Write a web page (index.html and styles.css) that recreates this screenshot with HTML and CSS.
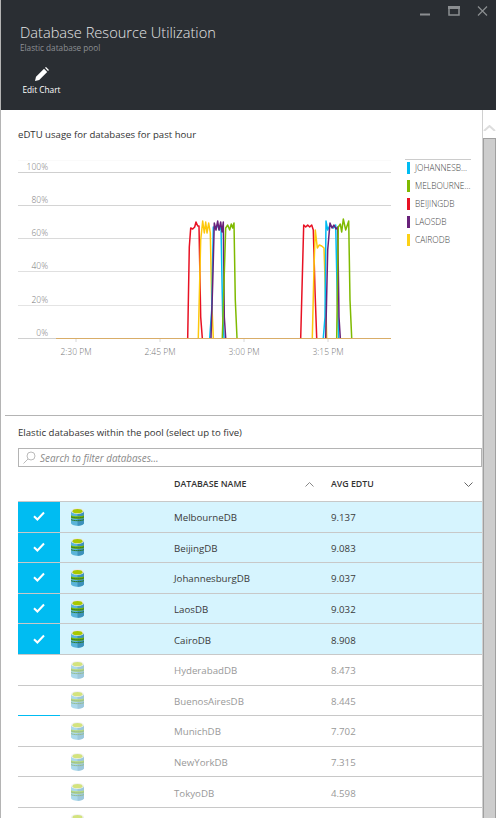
FILE: index.html
```html
<!DOCTYPE html>
<html>
	<head>
		<meta charset="utf-8">
		<title>Database Resource Utilization</title>
		<link rel="stylesheet" href="styles.css">
	</head>
	<body>
		<svg class="defs" width="0" height="0">
			<symbol id="db" viewBox="0 0 13 18">
				<path d="M0 3v12c0 1.600 3 2.800 6.500 2.800S13 16.600 13 15V3z" fill="#59b4d9"/>
				<path d="M6.500 3v14.800c3.500 0 6.500-1.200 6.500-2.800V3z" fill="#3e92bc"/>
				<path d="M0 7.200c2 1.400 11 1.400 13 0v2.600c-2 1.400-11 1.400-13 0z" fill="#7fba00"/>
				<path d="M0 8.800c2 1.400 11 1.400 13 0M0 11.600c2 1.400 11 1.400 13 0" fill="none" stroke="#2c7a2c" stroke-width="1"/>
				<ellipse cx="6.500" cy="3" rx="6.500" ry="3" fill="#e8e8e8"/>
				<ellipse cx="6.500" cy="3.200" rx="5" ry="2.100" fill="#a8c800"/>
			</symbol>
			<symbol id="tick" viewBox="0 0 12 10">
				<path d="M1 5.200l3.400 3.300L11 1.500" fill="none" stroke="#fff" stroke-width="2"/>
			</symbol>
		</svg>
		<div class="blade">
			<div class="top">
				<div class="win-btns">
					<svg width="70" height="12" viewBox="0 0 70 12">
						<rect x="0" y="7.500" width="10" height="2" fill="#8b8e91"/>
						<rect x="29" y="1" width="10" height="8" fill="none" stroke="#8b8e91" stroke-width="1.500"/>
						<rect x="28" y="0" width="12" height="3" fill="#8b8e91"/>
						<path d="M58 .500l9 9M67 .500l-9 9" stroke="#8b8e91" stroke-width="1.200"/>
					</svg>
				</div>
				<h1>Database Resource Utilization</h1>
				<div class="sub">Elastic database pool</div>
				<div class="cmd">
					<svg width="14" height="14" viewBox="0 0 14 14">
						<path d="M0 14l1-4.200 8-8 3.200 3.200-8 8zM10 0.800l1-0.800 3 3-1 1z" fill="#fff"/>
					</svg>
					<span>Edit Chart</span>
				</div>
			</div>
			<div class="content">
				<div class="main">
					<div class="chart-section">
						<div class="chart-title">eDTU usage for databases for past hour</div>
						<div class="chart-row">
							<svg class="chart" width="385" height="212" viewBox="18 150 385 212">
								<g stroke-width="1">
									<path d="M18 160.500H391" stroke="#fafafa"/>
									<path d="M18 172.500H391" stroke="#cfcfcf"/>
									<path d="M18 205.500H391" stroke="#d4d4d4"/>
									<path d="M18 238.500H391" stroke="#dadada"/>
									<path d="M18 271.500H391" stroke="#e0e0e0"/>
									<path d="M18 305.500H391" stroke="#e4e4e4"/>
									<path d="M18 338.500H391" stroke="#d0d0d0"/>
									<path d="M76 339v3M160 339v3M244 339v3M328 339v3" stroke="#d8d8d8"/>
								</g>
								<g class="ylabels">
									<text x="48" y="170">100%</text>
									<text x="48" y="203">80%</text>
									<text x="48" y="236">60%</text>
									<text x="48" y="269">40%</text>
									<text x="48" y="303">20%</text>
									<text x="48" y="336">0%</text>
								</g>
								<g class="xlabels">
									<text x="76" y="355">2:30 PM</text>
									<text x="160" y="355">2:45 PM</text>
									<text x="244" y="355">3:00 PM</text>
									<text x="328" y="355">3:15 PM</text>
								</g>
								<g fill="none" stroke-width="1.500" stroke-linejoin="round">
									<path stroke="#e81123" d="M187.700 338L189.300 247 190.700 228 192.700 229 194.700 227 196 222 197.700 226 199 226 200.700 317 202.300 338M300.700 338L303.700 225 305.700 227 307.700 225 309.700 227 311.700 225 313.300 230 315 290 316.700 338"/>
									<path stroke="#fdc80c" d="M198.300 338L200.700 240 202.700 221 204.300 233 205.700 222 207 233 208.700 223 210.300 233 211.700 300 213.300 338M312.300 338L314 267 315.300 230 317.300 248 319.300 245 321.700 246 324 248 325.700 300 326.700 338"/>
									<path stroke="#00bcf2" d="M209.700 338L211.700 310 213.300 227 215 229 217.300 225 219.300 230 221 227 222.700 317 224 338M323.300 338L325 317 326 221 327.700 230 330 225 333.300 228 335.700 225 337.300 300 338.700 338"/>
									<path stroke="#68217a" d="M211 338L212.700 283 214.300 223 216 230 217.700 221 219 230 220.700 222 222 232 223.300 222 224.300 317 225.700 338M325.700 338L327.700 250 330 223 332 228 334 225 336 229 337.700 227 339 317 340.300 338"/>
									<path stroke="#7fba00" d="M222.300 338L224 283 225.700 228 227.700 225 229.700 230 231.300 224 232.700 228 234 223 235.300 300 237 338M336.700 338L338.300 227 340.300 224 341.700 232 343.300 219 345.700 230 348.700 221 350 300 351.700 338"/>
								</g>
								<path d="M56 338.500H391" stroke="#d9ad68" stroke-width="1" fill="none"/>
							</svg>
							<ul class="legend">
								<li><i class="sw-blue"></i>JOHANNESB...</li>
								<li><i class="sw-green"></i>MELBOURNE...</li>
								<li><i class="sw-red"></i>BEIJINGDB</li>
								<li><i class="sw-purple"></i>LAOSDB</li>
								<li><i class="sw-yellow"></i>CAIRODB</li>
							</ul>
						</div>
					</div>
					<div class="list-section">
						<div class="list-title">Elastic databases within the pool (select up to five)</div>
						<div class="search">
							<svg width="13" height="13" viewBox="0 0 13 13">
								<circle cx="8" cy="5" r="4" fill="none" stroke="#bbb"/>
								<path d="M5 8l-4.500 4.500" stroke="#bbb"/>
							</svg>
							<span>Search to filter databases...</span>
						</div>
						<div class="thead">
							<div class="c-check"></div>
							<div class="c-icon"></div>
							<div class="c-name">DATABASE NAME
								<svg width="9" height="5" viewBox="0 0 9 5"><path d="M.5 4.500l4-4 4 4" fill="none" stroke="#888"/></svg>
							</div>
							<div class="c-val">AVG EDTU
								<svg width="9" height="5" viewBox="0 0 9 5"><path d="M.5.500l4 4 4-4" fill="none" stroke="#666"/></svg>
							</div>
						</div>
						<div class="row sel">
							<div class="c-check"><svg width="12" height="10"><use href="#tick"/></svg></div>
							<div class="c-icon"><svg width="13" height="18"><use href="#db"/></svg></div>
							<div class="c-name">MelbourneDB</div>
							<div class="c-val">9.137</div>
						</div>
						<div class="row sel">
							<div class="c-check"><svg width="12" height="10"><use href="#tick"/></svg></div>
							<div class="c-icon"><svg width="13" height="18"><use href="#db"/></svg></div>
							<div class="c-name">BeijingDB</div>
							<div class="c-val">9.083</div>
						</div>
						<div class="row sel">
							<div class="c-check"><svg width="12" height="10"><use href="#tick"/></svg></div>
							<div class="c-icon"><svg width="13" height="18"><use href="#db"/></svg></div>
							<div class="c-name">JohannesburgDB</div>
							<div class="c-val">9.037</div>
						</div>
						<div class="row sel">
							<div class="c-check"><svg width="12" height="10"><use href="#tick"/></svg></div>
							<div class="c-icon"><svg width="13" height="18"><use href="#db"/></svg></div>
							<div class="c-name">LaosDB</div>
							<div class="c-val">9.032</div>
						</div>
						<div class="row sel">
							<div class="c-check"><svg width="12" height="10"><use href="#tick"/></svg></div>
							<div class="c-icon"><svg width="13" height="18"><use href="#db"/></svg></div>
							<div class="c-name">CairoDB</div>
							<div class="c-val">8.908</div>
						</div>
						<div class="row">
							<div class="c-check"></div>
							<div class="c-icon"><svg width="13" height="18"><use href="#db"/></svg></div>
							<div class="c-name">HyderabadDB</div>
							<div class="c-val">8.473</div>
						</div>
						<div class="row active">
							<div class="c-check"></div>
							<div class="c-icon"><svg width="13" height="18"><use href="#db"/></svg></div>
							<div class="c-name">BuenosAiresDB</div>
							<div class="c-val">8.445</div>
						</div>
						<div class="row">
							<div class="c-check"></div>
							<div class="c-icon"><svg width="13" height="18"><use href="#db"/></svg></div>
							<div class="c-name">MunichDB</div>
							<div class="c-val">7.702</div>
						</div>
						<div class="row">
							<div class="c-check"></div>
							<div class="c-icon"><svg width="13" height="18"><use href="#db"/></svg></div>
							<div class="c-name">NewYorkDB</div>
							<div class="c-val">7.315</div>
						</div>
						<div class="row">
							<div class="c-check"></div>
							<div class="c-icon"><svg width="13" height="18"><use href="#db"/></svg></div>
							<div class="c-name">TokyoDB</div>
							<div class="c-val">4.598</div>
						</div>
						<div class="row">
							<div class="c-check"></div>
							<div class="c-icon"><svg width="13" height="18"><use href="#db"/></svg></div>
							<div class="c-name"></div>
							<div class="c-val"></div>
						</div>
					</div>
				</div>
				<div class="scroll">
					<svg width="13" height="6" viewBox="0 0 13 6"><path d="M1 6l5.500-5 5.500 5" fill="none" stroke="#ddd" stroke-width="2"/></svg>
					<div class="thumb"></div>
				</div>
			</div>
		</div>
	</body>
</html>
```

FILE: styles.css
```css
*{
	margin: 0;
	padding: 0;
	box-sizing: border-box;
}
html,body{
	height: 818px;
	overflow: hidden;
	background: #fff;
	font-family: "Open Sans", "Liberation Sans", sans-serif;
}
li{
	list-style: none;
}
.defs{
	display: block;
	height: 0;
}
.blade{
	width: 496px;
	height: 818px;
	display: flex;
	flex-direction: column;
	border-left: 1px solid #b4b4b4;
	overflow: hidden;
}
.top{
	height: 110px;
	flex: none;
	background: #2a2e33;
	color: #fff;
	padding: 0 0 0 19px;
	position: relative;
}
.win-btns{
	position: absolute;
	top: 6px;
	right: 6px;
	line-height: 0;
}
.top h1{
	padding-top: 22px;
	font-size: 14.600px;
	font-weight: 300;
	line-height: 20px;
	color: #e4e5e6;
}
.sub{
	font-size: 8.200px;
	line-height: 12px;
	color: #8d9093;
}
.cmd{
	margin-top: 13px;
	width: 43px;
	display: flex;
	flex-direction: column;
	align-items: center;
	font-size: 8.300px;
	line-height: 12px;
}
.cmd svg{
	margin-bottom: 3px;
}
.content{
	flex: 1;
	display: flex;
	min-height: 0;
}
.main{
	width: 481px;
	flex: none;
}
.chart-section{
	height: 305px;
	padding-left: 17px;
	overflow: hidden;
}
.chart-title{
	padding-top: 18px;
	height: 40px;
	font-size: 9.600px;
	line-height: 14px;
	color: #333;
}
.chart-row{
	display: flex;
}
.chart{
	display: block;
	flex: none;
}
.ylabels text{
	font-size: 8.500px;
	font-weight: 300;
	fill: #777;
	text-anchor: end;
}
.xlabels text{
	font-size: 8.500px;
	font-weight: 300;
	fill: #777;
	text-anchor: middle;
}
.legend{
	margin: 9px 0 0 2px;
	width: 66px;
	align-self: flex-start;
	border-top: 1px solid #ccc;
	font-size: 8.400px;
	font-weight: 300;
	line-height: 14px;
	color: #444;
	white-space: nowrap;
}
.legend li{
	height: 18px;
	padding-top: 1px;
	display: flex;
	align-items: flex-start;
}
.legend i{
	width: 3px;
	height: 12px;
	margin: 1px 5px 0 2px;
}
.sw-blue{background: #00bcf2;}
.sw-green{background: #7fba00;}
.sw-red{background: #e81123;}
.sw-purple{background: #68217a;}
.sw-yellow{background: #fcd116;}
.list-section{
	margin-left: 4px;
	border-top: 1px solid #b4b4b4;
	padding-left: 13px;
}
.list-title{
	padding-top: 10px;
	height: 32px;
	font-size: 9.600px;
	line-height: 14px;
	color: #333;
}
.search{
	height: 19px;
	border: 1px solid #b4b4b4;
	display: flex;
	align-items: center;
	padding-left: 4px;
	font-size: 9.900px;
	font-style: italic;
	color: #8a8a8a;
}
.search svg{
	margin-right: 4px;
}
.thead{
	height: 35px;
	display: flex;
	align-items: center;
	border-bottom: 1px solid #c8c8c8;
	font-size: 8.800px;
	font-weight: 600;
	color: #333;
}
.thead .c-name,.thead .c-val{
	display: flex;
	justify-content: space-between;
	align-items: center;
}
.thead .c-name{
	padding-right: 17px;
}
.thead .c-val{
	padding-right: 9px;
}
.row{
	height: 30.600px;
	display: flex;
	align-items: stretch;
	border-bottom: 1px solid #c8c8c8;
	font-size: 9.700px;
	color: #999;
}
.c-check{
	width: 42px;
	flex: none;
	display: flex;
	align-items: center;
	justify-content: center;
}
.c-icon{
	width: 114px;
	flex: none;
	display: flex;
	align-items: center;
	padding-left: 11px;
}
.c-icon svg{
	opacity: .5;
}
.c-name{
	width: 157px;
	flex: none;
}
.c-val{
	flex: 1;
}
.row .c-name,.row .c-val{
	display: flex;
	align-items: center;
	padding-top: 2px;
}
.row.sel{
	background: #d6f4fe;
	color: #3a3a3a;
}
.row.sel .c-check{
	background: #00bcf2;
	padding-bottom: 1px;
}
.row.sel .c-icon svg{
	opacity: 1;
}
.row.active{
	position: relative;
}
.row.active::after{
	content: "";
	position: absolute;
	left: 0;
	bottom: -1px;
	width: 42px;
	height: 1px;
	background: #00bcf2;
}
.scroll{
	flex: 1;
	border-left: 1px solid #d0d0d0;
	display: flex;
	flex-direction: column;
	align-items: center;
	padding-top: 15px;
}
.thumb{
	margin-top: 7px;
	flex: 1;
	width: 100%;
	background: #cdcdcd;
	border: 1px solid #a0a0a0;
	border-bottom: 0;
}
```
